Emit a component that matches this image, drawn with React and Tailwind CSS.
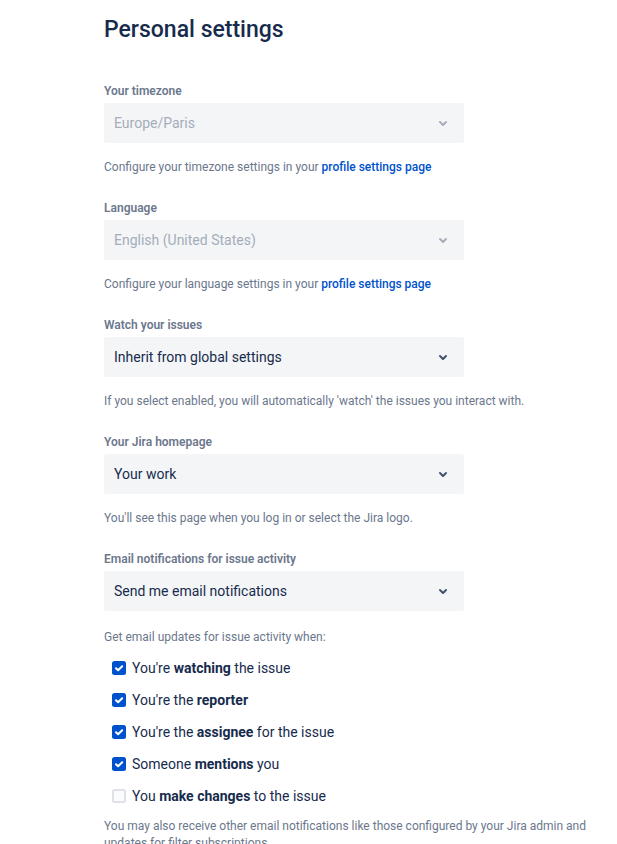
import React from "react";

const font = { fontFamily: 'Roboto, "Noto Sans", sans-serif' };

function Chevron({ disabled }) {
  return (
    <svg width="24" height="24" viewBox="0 0 24 24" className={disabled ? "text-[#A5ADBA]" : "text-[#42526E]"}>
      <path
        fill="currentColor"
        fillRule="evenodd"
        d="M8.292 10.293a1.009 1.009 0 000 1.419l2.939 2.965c.218.215.5.322.779.322s.556-.107.769-.322l2.93-2.955a1.01 1.01 0 000-1.419.987.987 0 00-1.406 0l-2.298 2.317-2.307-2.327a.99.99 0 00-1.406 0z"
      />
    </svg>
  );
}

function Select({ value, disabled }) {
  return (
    <div className="mt-1 flex h-10 w-[360px] items-center justify-between rounded-[3px] bg-[#F4F5F7] pl-[10px] pr-[9px]">
      <span className={"text-[14px] leading-5 " + (disabled ? "text-[#A5ADBA]" : "text-[#172B4D]")}>{value}</span>
      <Chevron disabled={disabled} />
    </div>
  );
}

function Label({ children }) {
  return <div className="pt-px text-[12px] font-semibold leading-4 text-[#6B778C]">{children}</div>;
}

function Helper({ children }) {
  return <p className="mt-4 text-[12px] leading-4 text-[#6B778C]">{children}</p>;
}

function Link() {
  return <a className="font-medium text-[#0052CC]">profile settings page</a>;
}

function Check({ checked, children }) {
  return (
    <div className="flex h-8 items-center">
      <div className="flex w-[28px] justify-center pl-[2px]">
        {checked ? (
          <svg width="14" height="14" viewBox="0 0 14 14">
            <rect x="0" y="0" width="14" height="14" rx="2.5" fill="#0052CC" />
            <path d="M4 7.2l2.1 2.1L10.2 5.2" stroke="#fff" strokeWidth="2" fill="none" strokeLinecap="round" strokeLinejoin="round" />
          </svg>
        ) : (
          <div className="h-[14px] w-[14px] rounded-[2.5px] border-2 border-[#DFE1E6] bg-[#FAFBFC]" />
        )}
      </div>
      <span className="text-[14px] leading-5 text-[#172B4D]">{children}</span>
    </div>
  );
}

export default function App() {
  return (
    <div className="min-h-[844px] bg-white pl-[104px] pt-[16px]" style={font}>
      <h1 className="text-[23px] font-medium leading-[28px] text-[#172B4D]">Personal settings</h1>

      <div className="mt-[38px]">
        <Label>Your timezone</Label>
        <Select value="Europe/Paris" disabled />
        <Helper>
          Configure your timezone settings in your <Link />
        </Helper>
      </div>

      <div className="mt-[24px]">
        <Label>Language</Label>
        <Select value="English (United States)" disabled />
        <Helper>
          Configure your language settings in your <Link />
        </Helper>
      </div>

      <div className="mt-[24px]">
        <Label>Watch your issues</Label>
        <Select value="Inherit from global settings" />
        <Helper>If you select enabled, you will automatically 'watch' the issues you interact with.</Helper>
      </div>

      <div className="mt-[24px]">
        <Label>Your Jira homepage</Label>
        <Select value="Your work" />
        <Helper>You'll see this page when you log in or select the Jira logo.</Helper>
      </div>

      <div className="mt-[24px]">
        <Label>Email notifications for issue activity</Label>
        <Select value="Send me email notifications" />
        <p className="mt-[18px] text-[12px] leading-4 text-[#6B778C]">Get email updates for issue activity when:</p>
        <div className="mt-[7px]">
          <Check checked>
            You're <b className="font-bold">watching</b> the issue
          </Check>
          <Check checked>
            You're the <b className="font-bold">reporter</b>
          </Check>
          <Check checked>
            You're the <b className="font-bold">assignee</b> for the issue
          </Check>
          <Check checked>
            Someone <b className="font-bold">mentions</b> you
          </Check>
          <Check>
            You <b className="font-bold">make changes</b> to the issue
          </Check>
        </div>
        <p className="mt-[6px] w-[490px] text-[12px] leading-[17px] text-[#6B778C]">
          You may also receive other email notifications like those configured by your Jira admin and updates for filter subscriptions.
        </p>
      </div>
    </div>
  );
}
